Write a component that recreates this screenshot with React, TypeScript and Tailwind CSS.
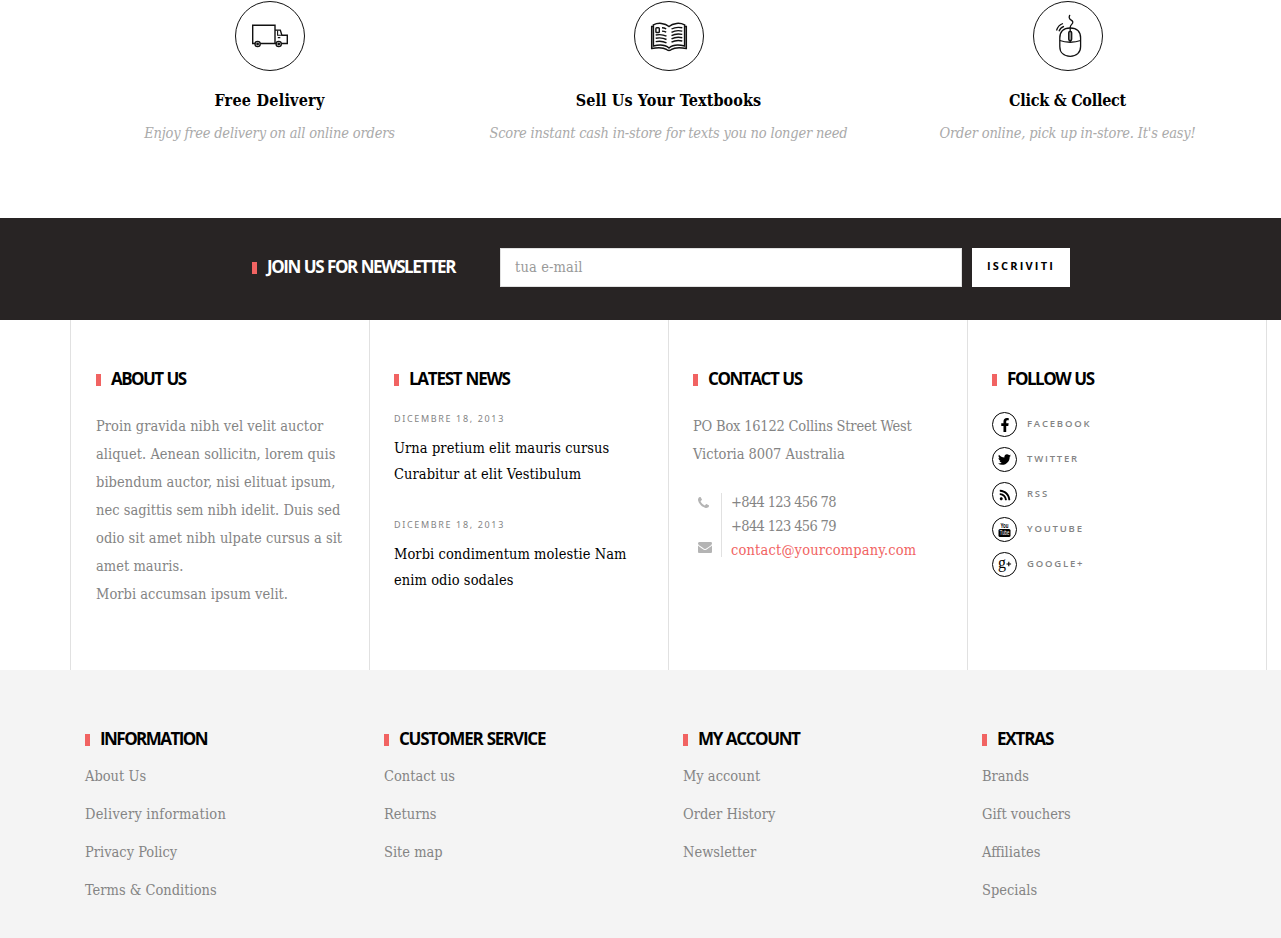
import React from 'react';
import { FaFacebookF, FaTwitter, FaRss } from 'react-icons/fa';

const TruckIcon = () => (
  <svg width="38" height="24" viewBox="0 0 38 24" fill="none" stroke="#111" strokeWidth="1.4">
    <path d="M4 19.5H1.7V1.2H24v18.3H9.200M24 19.5h1M30.400 19.500h5.900v-8.200h-5.400l-1.600-5.200H24" />
    <path d="M26.6 6.500v4.800h4M26.8 13.6h2.500" strokeWidth="1.1" />
    <circle cx="6.6" cy="20" r="2.6" />
    <circle cx="27.7" cy="20" r="2.6" />
    <circle cx="6.6" cy="20" r=".7" />
    <circle cx="27.7" cy="20" r=".7" />
  </svg>
);

const BookIcon = () => (
  <svg width="38" height="30" viewBox="0 0 38 30" fill="none" stroke="#111" strokeWidth="1.5" className="mt-0.5">
    <path d="M19 4.500C15 .9 8 .5 3.400 2.800V24c5.200-1.400 12-1.200 15.600 2 3.600-3.200 10.400-3.400 15.600-2V2.800C30 .5 23 .9 19 4.500z" />
    <path d="M3 4.500H1.700v21.900c6-1 12-.8 14.700 1 1 1.400 4.200 1.400 5.200 0 2.700-1.800 8.700-2 14.700-1V4.500H35" />
    <rect x="5.900" y="5.700" width="3.400" height="4.800" rx=".8" strokeWidth="1.400" />
    <path
      d="M12 5.800c1.500 0 3 .4 4.200 1M12 9.100c1.500 0 3 .4 4.200 1M5.700 13c4-.8 7.600-.4 10.800 1.200M5.700 16.300c4-.8 7.600-.4 10.800 1.200M5.700 19.600c4-.8 7.600-.4 10.800 1.200M21.500 7c3-1.600 7-2 10.800-1.200M21.500 10.300c3-1.600 7-2 10.800-1.200M21.500 13.600c3-1.600 7-2 10.800-1.200M21.500 16.900c3-1.600 7-2 10.800-1.200M21.500 20.200c3-1.600 7-2 10.800-1.200"
      strokeWidth="1.400"
    />
  </svg>
);

const MouseIcon = () => (
  <svg width="28" height="44" viewBox="0 0 28 44" fill="none" stroke="#111" strokeWidth="1.300" className="ml-0.5">
    <path d="M15.200 14C8 14 4.800 18 4.800 24v8.500c0 6 4 9.800 10.400 9.800s10.400-3.800 10.400-9.800V24c0-6-3.200-10-10.400-10z" />
    <path d="M4.800 26.500c6 2.300 14.800 2.300 20.800 0M15.200 17.500v-4c0-3 3-3.300 2.600-5.700-.3-1.800-3.600-1.800-3.600-4.300 0-1.200.4-2 .6-2.600M15.200 26.500v2" />
    <rect x="13.700" y="17.500" width="3" height="9" rx="1.200" fill="#999" />
    <path d="M8 9.500C4.500 10.500 2.600 13 1.500 16.500M9 12.300c-2.500.8-4.200 2.500-5 5" strokeWidth="1.300" />
  </svg>
);

const PhoneIcon = () => (
  <svg width="11" height="11" viewBox="0 128 1408 1408" fill="#b4b4b4">
    <path d="M1408 1240q0 27-10 70.5t-21 68.5q-21 50-122 106-94 51-186 51-27 0-53-3.500t-57.500-12.500-47-14.500-55.500-20.500-49-18q-98-35-175-83-127-79-264-216t-216-264q-48-77-83-175-3-9-18-49t-20.500-55.500-14.500-47-12.500-57.500-3.500-53q0-92 51-186 56-101 106-122 25-11 68.500-21t70.500-10q14 0 21 3 18 6 53 76 11 19 30 54t35 63.500 31 53.500q3 4 17.500 25t21.500 35.500 7 28.500q0 20-28.500 50t-62 55-62 53-28.500 46q0 9 5 22.500t8.500 20.500 14 24 11.500 19q76 137 174 235t235 174q2 1 19 11.500t24 14 20.500 8.500 22.500 5q18 0 46-28.500t53-62 55-62 50-28.500q14 0 28.500 7t35.500 21.500 25 17.500q25 15 53.500 31t63.500 35 54 30q70 35 76 53 3 7 3 21z" />
  </svg>
);

const MailIcon = () => (
  <svg width="14" height="11" viewBox="0 256 1792 1408" fill="#b4b4b4">
    <path d="M1792 710v794q0 66-47 113t-113 47h-1472q-66 0-113-47t-47-113v-794q44 49 101 87 362 246 497 345 57 42 92.500 65.500t94.500 48 110 24.500h2q51 0 110-24.500t94.500-48 92.500-65.500q170-123 498-345 57-39 100-87zm0-294q0 79-49 151t-122 123q-376 261-468 325-10 7-42.500 31t-54 38.500-52 32.500-57.500 27-50 9h-2q-23 0-50-9t-57.500-27-52-32.500-54-38.500-42.500-31q-91-64-262-182.500t-205-142.500q-62-42-117-115.500t-55-136.500q0-78 41.500-130t118.500-52h1472q65 0 112.500 47t47.500 113z" />
  </svg>
);

const YoutubeIcon = () => (
  <svg width="13" height="17" viewBox="0 0 13 17" className="overflow-visible font-['Liberation_Sans',sans-serif]">
    <text x="2.500" y="7.300" fontSize="7" fontWeight="bold" textLength="8" lengthAdjust="spacingAndGlyphs">You</text>
    <rect x=".5" y="8" width="12" height="8" rx="1.500" />
    <text x="1.800" y="14.300" fontSize="6.500" textLength="9.500" lengthAdjust="spacingAndGlyphs" fill="#fff">Tube</text>
  </svg>
);

const GooglePlusIcon = () => (
  <svg width="15" height="17" viewBox="0 0 15 17" className="overflow-visible font-['Liberation_Serif',serif]">
    <text x="1" y="12" fontSize="17" textLength="8" lengthAdjust="spacingAndGlyphs">g</text>
    <path d="M9.500 8h4.600M11.800 5.700v4.600" stroke="#000" strokeWidth="1.100" />
  </svg>
);

const features = [
  { icon: TruckIcon, title: 'Free Delivery', text: 'Enjoy free delivery on all online orders', tracking: 'tracking-[0.25px]' },
  { icon: BookIcon, title: 'Sell Us Your Textbooks', text: 'Score instant cash in-store for texts you no longer need', tracking: 'tracking-[0.1px]' },
  { icon: MouseIcon, title: 'Click & Collect', text: "Order online, pick up in-store. It's easy!", tracking: 'tracking-[-0.25px]' },
];

const news = [
  { date: 'Dicembre 18, 2013', lines: ['Urna pretium elit mauris cursus', 'Curabitur at elit Vestibulum'] },
  { date: 'Dicembre 18, 2013', lines: ['Morbi condimentum molestie Nam', 'enim odio sodales'] },
];

const about = [
  'Proin gravida nibh vel velit auctor',
  'aliquet. Aenean sollicitn, lorem quis',
  'bibendum auctor, nisi elituat ipsum,',
  'nec sagittis sem nibh idelit. Duis sed',
  'odio sit amet nibh ulpate cursus a sit',
  'amet mauris.',
  'Morbi accumsan ipsum velit.',
];

const socials = [
  { label: 'Facebook', icon: <FaFacebookF size={14} /> },
  { label: 'Twitter', icon: <FaTwitter size={13} /> },
  { label: 'RSS', icon: <FaRss size={12} /> },
  { label: 'Youtube', icon: <YoutubeIcon /> },
  { label: 'Google+', icon: <GooglePlusIcon /> },
];

const linkGroups = [
  { title: 'Information', tracking: 'tracking-[-1.55px]', links: ['About Us', 'Delivery information', 'Privacy Policy', 'Terms & Conditions'] },
  { title: 'Customer Service', tracking: 'tracking-[-1.22px]', links: ['Contact us', 'Returns', 'Site map'] },
  { title: 'My Account', tracking: 'tracking-[-1.4px]', links: ['My account', 'Order History', 'Newsletter'] },
  { title: 'Extras', tracking: 'tracking-[-1.15px]', links: ['Brands', 'Gift vouchers', 'Affiliates', 'Specials'] },
];

const Heading: React.FC<{ children: React.ReactNode; color?: string; tracking?: string }> = ({
  children,
  color = 'text-black',
  tracking = 'tracking-[-1.45px]',
}) => (
  <h3 className={`flex h-6 items-center whitespace-nowrap font-['Open_Sans',sans-serif] text-[17px] font-bold uppercase [word-spacing:1px] ${color} ${tracking}`}>
    <span className="mr-2.5 mt-0.5 h-3 w-[5px] bg-[#f16362]" />
    <span>{children}</span>
  </h3>
);

export default function App() {
  return (
    <div className="h-[938px] w-[1281px] overflow-hidden bg-white font-['DejaVu_Serif_Condensed','DejaVu_Serif',serif] text-[14.5px] text-[#848484]">
      {/* Services */}
      <section className="ml-[70px] grid h-[218px] w-[1197px] grid-cols-3 pt-px">
        {features.map(({ icon: Icon, title, text, tracking }) => (
          <div key={title} className="flex flex-col items-center whitespace-nowrap">
            <div className="flex size-[70px] items-center justify-center rounded-full border border-[#111]">
              <Icon />
            </div>
            <h4 className={`mt-[18px] text-base font-bold leading-6 text-black ${tracking}`}>{title}</h4>
            <p className="mt-2 italic leading-6 tracking-[-0.18px] text-[#aaa]">{text}</p>
          </div>
        ))}
      </section>

      {/* Newsletter */}
      <section className="flex h-[102px] items-start bg-[#282424] pl-[252px] pt-[30px]">
        <div className="w-[248px] pt-[7px]">
          <Heading color="text-white">Join us for newsletter</Heading>
        </div>
        <input
          type="text"
          placeholder="tua e-mail"
          className="h-[39px] w-[462px] border border-[#e1e1e1] bg-white px-[14px] pb-0.5 tracking-[0.15px] placeholder:text-[#999]"
        />
        <button className="ml-2.5 h-[39px] w-[98px] bg-white pb-0.5 font-['Open_Sans',sans-serif] text-[11px] font-bold uppercase tracking-[2.2px] text-black">
          Iscriviti
        </button>
      </section>

      {/* Footer blocks */}
      <section className="ml-[70px] grid h-[350px] w-[1197px] grid-cols-[299px_299px_299px_299px] whitespace-nowrap border-l border-[#e1e1e1] bg-white">
        <div className="border-r border-[#e1e1e1] pl-[25px] pt-[47px]">
          <Heading tracking="tracking-[-1.55px]">About Us</Heading>
          <p className="mt-[21px] leading-7 tracking-[0.03px]">
            {about.map((line) => (
              <span key={line} className="block">{line}</span>
            ))}
          </p>
        </div>
        <div className="border-r border-[#e1e1e1] pl-6 pt-[47px]">
          <Heading tracking="tracking-[-1.25px]">Latest News</Heading>
          <div className="mt-[18px]">
            {news.map(({ date, lines }) => (
              <article key={lines[0]} className="mb-7">
                <time className="block h-[26px] font-['Noto_Sans',sans-serif] text-[9px] uppercase leading-[20px] tracking-[1.65px]">{date}</time>
                <p className="leading-[26px] tracking-[0.07px] text-black">
                  {lines.map((line) => (
                    <span key={line} className="block">{line}</span>
                  ))}
                </p>
              </article>
            ))}
          </div>
        </div>
        <div className="border-r border-[#e1e1e1] pl-6 pt-[47px]">
          <Heading>Contact Us</Heading>
          <p className="mt-[21px] leading-7 tracking-[-0.2px]">
            PO Box 16122 Collins Street West
            <br />
            <span className="tracking-[-0.07px]">Victoria 8007 Australia</span>
          </p>
          <div className="mt-[25px] flex h-16">
            <div className="flex w-[29px] flex-col border-r border-[#e1e1e1] pl-[5px] pt-1">
              <PhoneIcon />
              <span className="mt-[34px]"><MailIcon /></span>
            </div>
            <div className="-mt-[3px] pl-[9px] leading-6">
              <p className="tracking-[-0.65px]">+844 123 456 78</p>
              <p className="tracking-[-0.65px]">+844 123 456 79</p>
              <p className="tracking-[0.18px] text-[#f16362]">contact@yourcompany.com</p>
            </div>
          </div>
        </div>
        <div className="border-r border-[#e1e1e1] pl-6 pt-[47px]">
          <Heading>Follow Us</Heading>
          <ul className="mt-[21px] space-y-2.5">
            {socials.map(({ label, icon }) => (
              <li key={label} className="flex items-center gap-2.5">
                <span className="flex size-[25px] items-center justify-center rounded-full border border-black text-black">{icon}</span>
                <span className="pb-px font-['Open_Sans',sans-serif] text-[9.5px] font-semibold uppercase tracking-[1.8px]">{label}</span>
              </li>
            ))}
          </ul>
        </div>
      </section>

      {/* Links */}
      <section className="h-[268px] bg-[#f4f4f4] pl-[85px] pt-[57px]">
        <div className="grid grid-cols-[299px_299px_299px_299px]">
          {linkGroups.map(({ title, tracking, links }) => (
            <div key={title}>
              <Heading tracking={tracking}>{title}</Heading>
              <ul className="mt-1.5 leading-[38px]">
                {links.map((link) => (
                  <li key={link} className={link === 'Delivery information' ? 'tracking-[0.22px]' : ''}>{link}</li>
                ))}
              </ul>
            </div>
          ))}
        </div>
      </section>
    </div>
  );
}
